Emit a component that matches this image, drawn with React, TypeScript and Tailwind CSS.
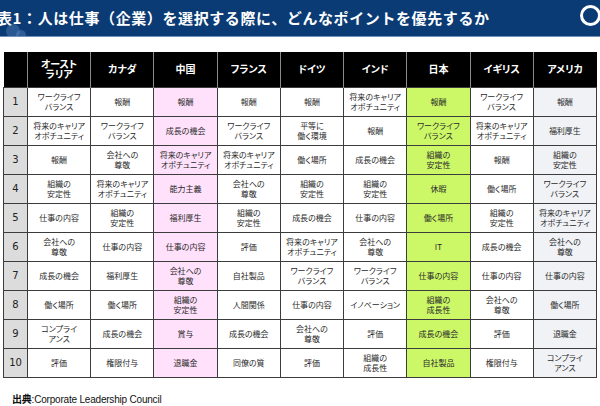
const countries = ["オースト\nラリア", "カナダ", "中国", "フランス", "ドイツ", "インド", "日本", "イギリス", "アメリカ"];

const CAREER = "将来のキャリア\nオポチュニティ";
const WLB = "ワークライフ\nバランス";
const STAB = "組織の\n安定性";
const RESP = "会社への\n尊敬";

const rows: string[][] = [
  [WLB, "報酬", "報酬", "報酬", "報酬", CAREER, "報酬", WLB, "報酬"],
  [CAREER, WLB, "成長の機会", WLB, "平等に\n働く環境", "報酬", WLB, CAREER, "福利厚生"],
  ["報酬", RESP, CAREER, CAREER, "働く場所", "成長の機会", STAB, "報酬", STAB],
  [STAB, CAREER, "能力主義", RESP, STAB, STAB, "休暇", "働く場所", WLB],
  ["仕事の内容", STAB, "福利厚生", STAB, "成長の機会", "仕事の内容", "働く場所", STAB, CAREER],
  [RESP, "仕事の内容", "仕事の内容", "評価", CAREER, RESP, "IT", "成長の機会", RESP],
  ["成長の機会", "福利厚生", RESP, "自社製品", WLB, WLB, "仕事の内容", "仕事の内容", "仕事の内容"],
  ["働く場所", "働く場所", STAB, "人間関係", "仕事の内容", "イノベーション", "組織の\n成長性", RESP, "働く場所"],
  ["コンプライ\nアンス", "成長の機会", "賞与", "成長の機会", RESP, "評価", "成長の機会", "評価", "退職金"],
  ["評価", "権限付与", "退職金", "同僚の質", "評価", "組織の\n成長性", "自社製品", "権限付与", "コンプライ\nアンス"],
];

// column tint, by index
const colBg = (i: number) => {
  if (i === 2) return "bg-[#ffe1fb]";
  if (i === 6) return "bg-[#ccf868]";
  if (i === 8) return "bg-[#f0f2f6]";
  return "bg-white";
};

export default function App() {
  return (
    <div className="relative h-[406px] w-[600px] overflow-hidden bg-white font-['Noto_Sans_CJK_JP',sans-serif]">
      {/* Title bar */}
      <div className="relative h-[36px] overflow-hidden bg-[#0b3b74]">
        <span className="absolute left-[6px] top-[24px] h-[14px] w-[14px] rounded-full bg-[#5b86c0]/40" />
        <span className="absolute left-[16px] top-[30px] h-[10px] w-[10px] rounded-full bg-[#6e97cf]/35" />
        <h1 className="-ml-[3px] flex h-full items-center text-[15px] font-bold tracking-[0.6px] text-white">
          表1：人は仕事（企業）を選択する際に、どんなポイントを優先するか
        </h1>
        <span className="absolute left-[580px] top-[5px] h-[21px] w-[21px] rounded-full border-[3px] border-white" />
      </div>
      <div className="h-px bg-[#6f8fbf]" />

      {/* Table */}
      <div className="mt-[15px] pl-[3px] pr-[3px]">
        <table className="w-full table-fixed border-collapse">
          <colgroup>
            <col className="w-[24px]" />
            {countries.map((_, i) => (
              <col key={i} />
            ))}
          </colgroup>
          <thead>
            <tr className="h-[35px] bg-black">
              <th className="border-r border-[#8a8a8a]" />
              {countries.map((c, i) => (
                <th
                  key={i}
                  className="whitespace-pre border-l border-[#8a8a8a] text-center text-[10px] font-bold leading-[10px] text-white [font-feature-settings:'palt']"
                >
                  {c}
                </th>
              ))}
            </tr>
          </thead>
          <tbody>
            {rows.map((row, r) => (
              <tr key={r} className="h-[29px]">
                <td className="border border-[#3c3c3c] bg-[#dcdcdc] text-center font-['DejaVu_Sans',sans-serif] text-[10px] text-[#222]">
                  {r + 1}
                </td>
                {row.map((cell, i) => (
                  <td
                    key={i}
                    className={`whitespace-pre border border-[#3c3c3c] text-center text-[8px] leading-[10px] text-[#2a2a2a] [font-feature-settings:'palt'] ${colBg(i)}`}
                  >
                    {cell}
                  </td>
                ))}
              </tr>
            ))}
          </tbody>
        </table>
      </div>

      {/* Source */}
      <p className="ml-[12px] mt-[14px] font-['Liberation_Sans','Noto_Sans_CJK_JP',sans-serif] text-[10px] tracking-[-0.2px] text-[#111]">
        <span className="font-bold">出典</span>:Corporate Leadership Council
      </p>
    </div>
  );
}
